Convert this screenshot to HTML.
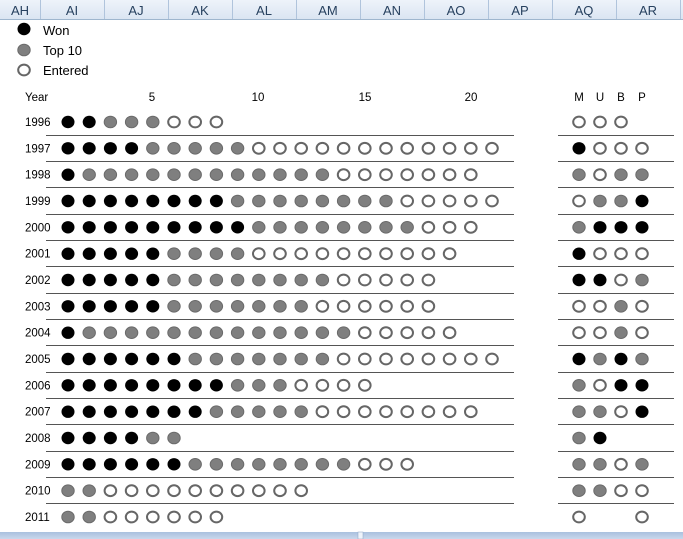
<!DOCTYPE html>
<html><head><meta charset="utf-8"><style>
html,body{margin:0;padding:0;background:#fff;width:683px;height:539px;overflow:hidden}
svg{display:block}
text{font-family:"Liberation Sans",sans-serif}
.w{fill:#000}
.t{fill:#7f7f7f;stroke:#6a6a6a;stroke-width:1}
.e{fill:#fff;stroke:#666;stroke-width:2}
.l{stroke:#555;stroke-width:1}
</style></head><body>
<svg width="683" height="539" viewBox="0 0 683 539">
<defs>
<linearGradient id="hg" x1="0" y1="0" x2="0" y2="1"><stop offset="0" stop-color="#eef3fa"/><stop offset="1" stop-color="#dbe5f2"/></linearGradient>
<linearGradient id="bg" x1="0" y1="0" x2="0" y2="1"><stop offset="0" stop-color="#a9c0de"/><stop offset="1" stop-color="#c9d8ec"/></linearGradient>
<ellipse id="W" class="w" rx="6.5" ry="6.2"/>
<ellipse id="T" class="t" rx="6.2" ry="5.8"/>
<ellipse id="E" class="e" rx="5.8" ry="5.4"/>
</defs>
<rect x="0" y="0" width="683" height="19" fill="url(#hg)"/>
<line x1="0" y1="19.5" x2="683" y2="19.5" stroke="#9eb6ce"/>
<g stroke="#b0c4dc">
<line x1="40.5" y1="0" x2="40.5" y2="19"/><line x1="104.5" y1="0" x2="104.5" y2="19"/><line x1="168.5" y1="0" x2="168.5" y2="19"/><line x1="232.5" y1="0" x2="232.5" y2="19"/><line x1="296.5" y1="0" x2="296.5" y2="19"/><line x1="360.5" y1="0" x2="360.5" y2="19"/><line x1="424.5" y1="0" x2="424.5" y2="19"/><line x1="488.5" y1="0" x2="488.5" y2="19"/><line x1="552.5" y1="0" x2="552.5" y2="19"/><line x1="616.5" y1="0" x2="616.5" y2="19"/><line x1="680.5" y1="0" x2="680.5" y2="19"/>
</g>
<g font-size="13" fill="#27415f" text-anchor="middle">
<text x="20" y="15">AH</text><text x="72" y="15">AI</text><text x="136" y="15">AJ</text><text x="200" y="15">AK</text><text x="264" y="15">AL</text><text x="328" y="15">AM</text><text x="392" y="15">AN</text><text x="456" y="15">AO</text><text x="520" y="15">AP</text><text x="584" y="15">AQ</text><text x="648" y="15">AR</text>
</g>
<!-- legend -->
<use href="#W" x="24" y="29"/><use href="#T" x="24" y="50"/><use href="#E" x="24" y="70"/>
<g font-size="13" fill="#000"><text x="43" y="35">Won</text><text x="43" y="55">Top 10</text><text x="43" y="75">Entered</text></g>
<g font-size="11.5" fill="#000">
<text x="25" y="101">Year</text>
<text x="152" y="101" text-anchor="middle">5</text><text x="258" y="101" text-anchor="middle">10</text><text x="365" y="101" text-anchor="middle">15</text><text x="471" y="101" text-anchor="middle">20</text>
<text x="579" y="101" text-anchor="middle">M</text><text x="600" y="101" text-anchor="middle">U</text><text x="621" y="101" text-anchor="middle">B</text><text x="642" y="101" text-anchor="middle">P</text>
<text x="25" y="126">1996</text><text x="25" y="152.3">1997</text><text x="25" y="178.7">1998</text><text x="25" y="205">1999</text><text x="25" y="231.3">2000</text><text x="25" y="257.7">2001</text><text x="25" y="284">2002</text><text x="25" y="310.3">2003</text><text x="25" y="336.7">2004</text><text x="25" y="363">2005</text><text x="25" y="389.3">2006</text><text x="25" y="415.7">2007</text><text x="25" y="442">2008</text><text x="25" y="468.3">2009</text><text x="25" y="494.7">2010</text><text x="25" y="521">2011</text>
</g>
<g class="l">
<line x1="46" y1="135.5" x2="514" y2="135.5"/><line x1="46" y1="161.5" x2="514" y2="161.5"/><line x1="46" y1="187.5" x2="514" y2="187.5"/><line x1="46" y1="214.5" x2="514" y2="214.5"/><line x1="46" y1="240.5" x2="514" y2="240.5"/><line x1="46" y1="266.5" x2="514" y2="266.5"/><line x1="46" y1="293.5" x2="514" y2="293.5"/><line x1="46" y1="319.5" x2="514" y2="319.5"/><line x1="46" y1="345.5" x2="514" y2="345.5"/><line x1="46" y1="372.5" x2="514" y2="372.5"/><line x1="46" y1="398.5" x2="514" y2="398.5"/><line x1="46" y1="424.5" x2="514" y2="424.5"/><line x1="46" y1="451.5" x2="514" y2="451.5"/><line x1="46" y1="477.5" x2="514" y2="477.5"/><line x1="46" y1="503.5" x2="514" y2="503.5"/>
<line x1="558" y1="135.5" x2="674" y2="135.5"/><line x1="558" y1="161.5" x2="674" y2="161.5"/><line x1="558" y1="187.5" x2="674" y2="187.5"/><line x1="558" y1="214.5" x2="674" y2="214.5"/><line x1="558" y1="240.5" x2="674" y2="240.5"/><line x1="558" y1="266.5" x2="674" y2="266.5"/><line x1="558" y1="293.5" x2="674" y2="293.5"/><line x1="558" y1="319.5" x2="674" y2="319.5"/><line x1="558" y1="345.5" x2="674" y2="345.5"/><line x1="558" y1="372.5" x2="674" y2="372.5"/><line x1="558" y1="398.5" x2="674" y2="398.5"/><line x1="558" y1="424.5" x2="674" y2="424.5"/><line x1="558" y1="451.5" x2="674" y2="451.5"/><line x1="558" y1="477.5" x2="674" y2="477.5"/><line x1="558" y1="503.5" x2="674" y2="503.5"/>
</g>
<!-- 1996 -->
<g transform="translate(0,122)"><use href="#W" x="68"/><use href="#W" x="89.2"/><use href="#T" x="110.4"/><use href="#T" x="131.6"/><use href="#T" x="152.8"/><use href="#E" x="174"/><use href="#E" x="195.2"/><use href="#E" x="216.4"/>
<use href="#E" x="579"/><use href="#E" x="600"/><use href="#E" x="621"/></g>
<!-- 1997 -->
<g transform="translate(0,148.3)"><use href="#W" x="68"/><use href="#W" x="89.2"/><use href="#W" x="110.4"/><use href="#W" x="131.6"/><use href="#T" x="152.8"/><use href="#T" x="174"/><use href="#T" x="195.2"/><use href="#T" x="216.4"/><use href="#T" x="237.6"/><use href="#E" x="258.8"/><use href="#E" x="280"/><use href="#E" x="301.2"/><use href="#E" x="322.4"/><use href="#E" x="343.6"/><use href="#E" x="364.8"/><use href="#E" x="386"/><use href="#E" x="407.2"/><use href="#E" x="428.4"/><use href="#E" x="449.6"/><use href="#E" x="470.8"/><use href="#E" x="492"/>
<use href="#W" x="579"/><use href="#E" x="600"/><use href="#E" x="621"/><use href="#E" x="642"/></g>
<!-- 1998 -->
<g transform="translate(0,174.7)"><use href="#W" x="68"/><use href="#T" x="89.2"/><use href="#T" x="110.4"/><use href="#T" x="131.6"/><use href="#T" x="152.8"/><use href="#T" x="174"/><use href="#T" x="195.2"/><use href="#T" x="216.4"/><use href="#T" x="237.6"/><use href="#T" x="258.8"/><use href="#T" x="280"/><use href="#T" x="301.2"/><use href="#T" x="322.4"/><use href="#E" x="343.6"/><use href="#E" x="364.8"/><use href="#E" x="386"/><use href="#E" x="407.2"/><use href="#E" x="428.4"/><use href="#E" x="449.6"/><use href="#E" x="470.8"/>
<use href="#T" x="579"/><use href="#E" x="600"/><use href="#T" x="621"/><use href="#T" x="642"/></g>
<!-- 1999 -->
<g transform="translate(0,201)"><use href="#W" x="68"/><use href="#W" x="89.2"/><use href="#W" x="110.4"/><use href="#W" x="131.6"/><use href="#W" x="152.8"/><use href="#W" x="174"/><use href="#W" x="195.2"/><use href="#W" x="216.4"/><use href="#T" x="237.6"/><use href="#T" x="258.8"/><use href="#T" x="280"/><use href="#T" x="301.2"/><use href="#T" x="322.4"/><use href="#T" x="343.6"/><use href="#T" x="364.8"/><use href="#T" x="386"/><use href="#E" x="407.2"/><use href="#E" x="428.4"/><use href="#E" x="449.6"/><use href="#E" x="470.8"/><use href="#E" x="492"/>
<use href="#E" x="579"/><use href="#T" x="600"/><use href="#T" x="621"/><use href="#W" x="642"/></g>
<!-- 2000 -->
<g transform="translate(0,227.3)"><use href="#W" x="68"/><use href="#W" x="89.2"/><use href="#W" x="110.4"/><use href="#W" x="131.6"/><use href="#W" x="152.8"/><use href="#W" x="174"/><use href="#W" x="195.2"/><use href="#W" x="216.4"/><use href="#W" x="237.6"/><use href="#T" x="258.8"/><use href="#T" x="280"/><use href="#T" x="301.2"/><use href="#T" x="322.4"/><use href="#T" x="343.6"/><use href="#T" x="364.8"/><use href="#T" x="386"/><use href="#T" x="407.2"/><use href="#E" x="428.4"/><use href="#E" x="449.6"/><use href="#E" x="470.8"/>
<use href="#T" x="579"/><use href="#W" x="600"/><use href="#W" x="621"/><use href="#W" x="642"/></g>
<!-- 2001 -->
<g transform="translate(0,253.7)"><use href="#W" x="68"/><use href="#W" x="89.2"/><use href="#W" x="110.4"/><use href="#W" x="131.6"/><use href="#W" x="152.8"/><use href="#T" x="174"/><use href="#T" x="195.2"/><use href="#T" x="216.4"/><use href="#T" x="237.6"/><use href="#E" x="258.8"/><use href="#E" x="280"/><use href="#E" x="301.2"/><use href="#E" x="322.4"/><use href="#E" x="343.6"/><use href="#E" x="364.8"/><use href="#E" x="386"/><use href="#E" x="407.2"/><use href="#E" x="428.4"/><use href="#E" x="449.6"/>
<use href="#W" x="579"/><use href="#E" x="600"/><use href="#E" x="621"/><use href="#E" x="642"/></g>
<!-- 2002 -->
<g transform="translate(0,280)"><use href="#W" x="68"/><use href="#W" x="89.2"/><use href="#W" x="110.4"/><use href="#W" x="131.6"/><use href="#W" x="152.8"/><use href="#T" x="174"/><use href="#T" x="195.2"/><use href="#T" x="216.4"/><use href="#T" x="237.6"/><use href="#T" x="258.8"/><use href="#T" x="280"/><use href="#T" x="301.2"/><use href="#T" x="322.4"/><use href="#E" x="343.6"/><use href="#E" x="364.8"/><use href="#E" x="386"/><use href="#E" x="407.2"/><use href="#E" x="428.4"/>
<use href="#W" x="579"/><use href="#W" x="600"/><use href="#E" x="621"/><use href="#T" x="642"/></g>
<!-- 2003 -->
<g transform="translate(0,306.3)"><use href="#W" x="68"/><use href="#W" x="89.2"/><use href="#W" x="110.4"/><use href="#W" x="131.6"/><use href="#W" x="152.8"/><use href="#T" x="174"/><use href="#T" x="195.2"/><use href="#T" x="216.4"/><use href="#T" x="237.6"/><use href="#T" x="258.8"/><use href="#T" x="280"/><use href="#T" x="301.2"/><use href="#E" x="322.4"/><use href="#E" x="343.6"/><use href="#E" x="364.8"/><use href="#E" x="386"/><use href="#E" x="407.2"/><use href="#E" x="428.4"/>
<use href="#E" x="579"/><use href="#E" x="600"/><use href="#T" x="621"/><use href="#E" x="642"/></g>
<!-- 2004 -->
<g transform="translate(0,332.7)"><use href="#W" x="68"/><use href="#T" x="89.2"/><use href="#T" x="110.4"/><use href="#T" x="131.6"/><use href="#T" x="152.8"/><use href="#T" x="174"/><use href="#T" x="195.2"/><use href="#T" x="216.4"/><use href="#T" x="237.6"/><use href="#T" x="258.8"/><use href="#T" x="280"/><use href="#T" x="301.2"/><use href="#T" x="322.4"/><use href="#T" x="343.6"/><use href="#E" x="364.8"/><use href="#E" x="386"/><use href="#E" x="407.2"/><use href="#E" x="428.4"/><use href="#E" x="449.6"/>
<use href="#E" x="579"/><use href="#E" x="600"/><use href="#T" x="621"/><use href="#E" x="642"/></g>
<!-- 2005 -->
<g transform="translate(0,359)"><use href="#W" x="68"/><use href="#W" x="89.2"/><use href="#W" x="110.4"/><use href="#W" x="131.6"/><use href="#W" x="152.8"/><use href="#W" x="174"/><use href="#T" x="195.2"/><use href="#T" x="216.4"/><use href="#T" x="237.6"/><use href="#T" x="258.8"/><use href="#T" x="280"/><use href="#T" x="301.2"/><use href="#T" x="322.4"/><use href="#E" x="343.6"/><use href="#E" x="364.8"/><use href="#E" x="386"/><use href="#E" x="407.2"/><use href="#E" x="428.4"/><use href="#E" x="449.6"/><use href="#E" x="470.8"/><use href="#E" x="492"/>
<use href="#W" x="579"/><use href="#T" x="600"/><use href="#W" x="621"/><use href="#T" x="642"/></g>
<!-- 2006 -->
<g transform="translate(0,385.3)"><use href="#W" x="68"/><use href="#W" x="89.2"/><use href="#W" x="110.4"/><use href="#W" x="131.6"/><use href="#W" x="152.8"/><use href="#W" x="174"/><use href="#W" x="195.2"/><use href="#W" x="216.4"/><use href="#T" x="237.6"/><use href="#T" x="258.8"/><use href="#T" x="280"/><use href="#E" x="301.2"/><use href="#E" x="322.4"/><use href="#E" x="343.6"/><use href="#E" x="364.8"/>
<use href="#T" x="579"/><use href="#E" x="600"/><use href="#W" x="621"/><use href="#W" x="642"/></g>
<!-- 2007 -->
<g transform="translate(0,411.7)"><use href="#W" x="68"/><use href="#W" x="89.2"/><use href="#W" x="110.4"/><use href="#W" x="131.6"/><use href="#W" x="152.8"/><use href="#W" x="174"/><use href="#W" x="195.2"/><use href="#T" x="216.4"/><use href="#T" x="237.6"/><use href="#T" x="258.8"/><use href="#T" x="280"/><use href="#T" x="301.2"/><use href="#E" x="322.4"/><use href="#E" x="343.6"/><use href="#E" x="364.8"/><use href="#E" x="386"/><use href="#E" x="407.2"/><use href="#E" x="428.4"/><use href="#E" x="449.6"/><use href="#E" x="470.8"/>
<use href="#T" x="579"/><use href="#T" x="600"/><use href="#E" x="621"/><use href="#W" x="642"/></g>
<!-- 2008 -->
<g transform="translate(0,438)"><use href="#W" x="68"/><use href="#W" x="89.2"/><use href="#W" x="110.4"/><use href="#W" x="131.6"/><use href="#T" x="152.8"/><use href="#T" x="174"/>
<use href="#T" x="579"/><use href="#W" x="600"/></g>
<!-- 2009 -->
<g transform="translate(0,464.3)"><use href="#W" x="68"/><use href="#W" x="89.2"/><use href="#W" x="110.4"/><use href="#W" x="131.6"/><use href="#W" x="152.8"/><use href="#W" x="174"/><use href="#T" x="195.2"/><use href="#T" x="216.4"/><use href="#T" x="237.6"/><use href="#T" x="258.8"/><use href="#T" x="280"/><use href="#T" x="301.2"/><use href="#T" x="322.4"/><use href="#T" x="343.6"/><use href="#E" x="364.8"/><use href="#E" x="386"/><use href="#E" x="407.2"/>
<use href="#T" x="579"/><use href="#T" x="600"/><use href="#E" x="621"/><use href="#T" x="642"/></g>
<!-- 2010 -->
<g transform="translate(0,490.7)"><use href="#T" x="68"/><use href="#T" x="89.2"/><use href="#E" x="110.4"/><use href="#E" x="131.6"/><use href="#E" x="152.8"/><use href="#E" x="174"/><use href="#E" x="195.2"/><use href="#E" x="216.4"/><use href="#E" x="237.6"/><use href="#E" x="258.8"/><use href="#E" x="280"/><use href="#E" x="301.2"/>
<use href="#T" x="579"/><use href="#T" x="600"/><use href="#E" x="621"/><use href="#E" x="642"/></g>
<!-- 2011 -->
<g transform="translate(0,517)"><use href="#T" x="68"/><use href="#T" x="89.2"/><use href="#E" x="110.4"/><use href="#E" x="131.6"/><use href="#E" x="152.8"/><use href="#E" x="174"/><use href="#E" x="195.2"/><use href="#E" x="216.4"/>
<use href="#E" x="579"/><use href="#E" x="642"/></g>
<!-- bottom bar -->
<rect x="0" y="532" width="683" height="7" fill="url(#bg)"/>
<rect x="358" y="532" width="5" height="7" fill="#eef3fa" stroke="#8aa3c4" stroke-width="0.5"/>
</svg>
</body></html>
